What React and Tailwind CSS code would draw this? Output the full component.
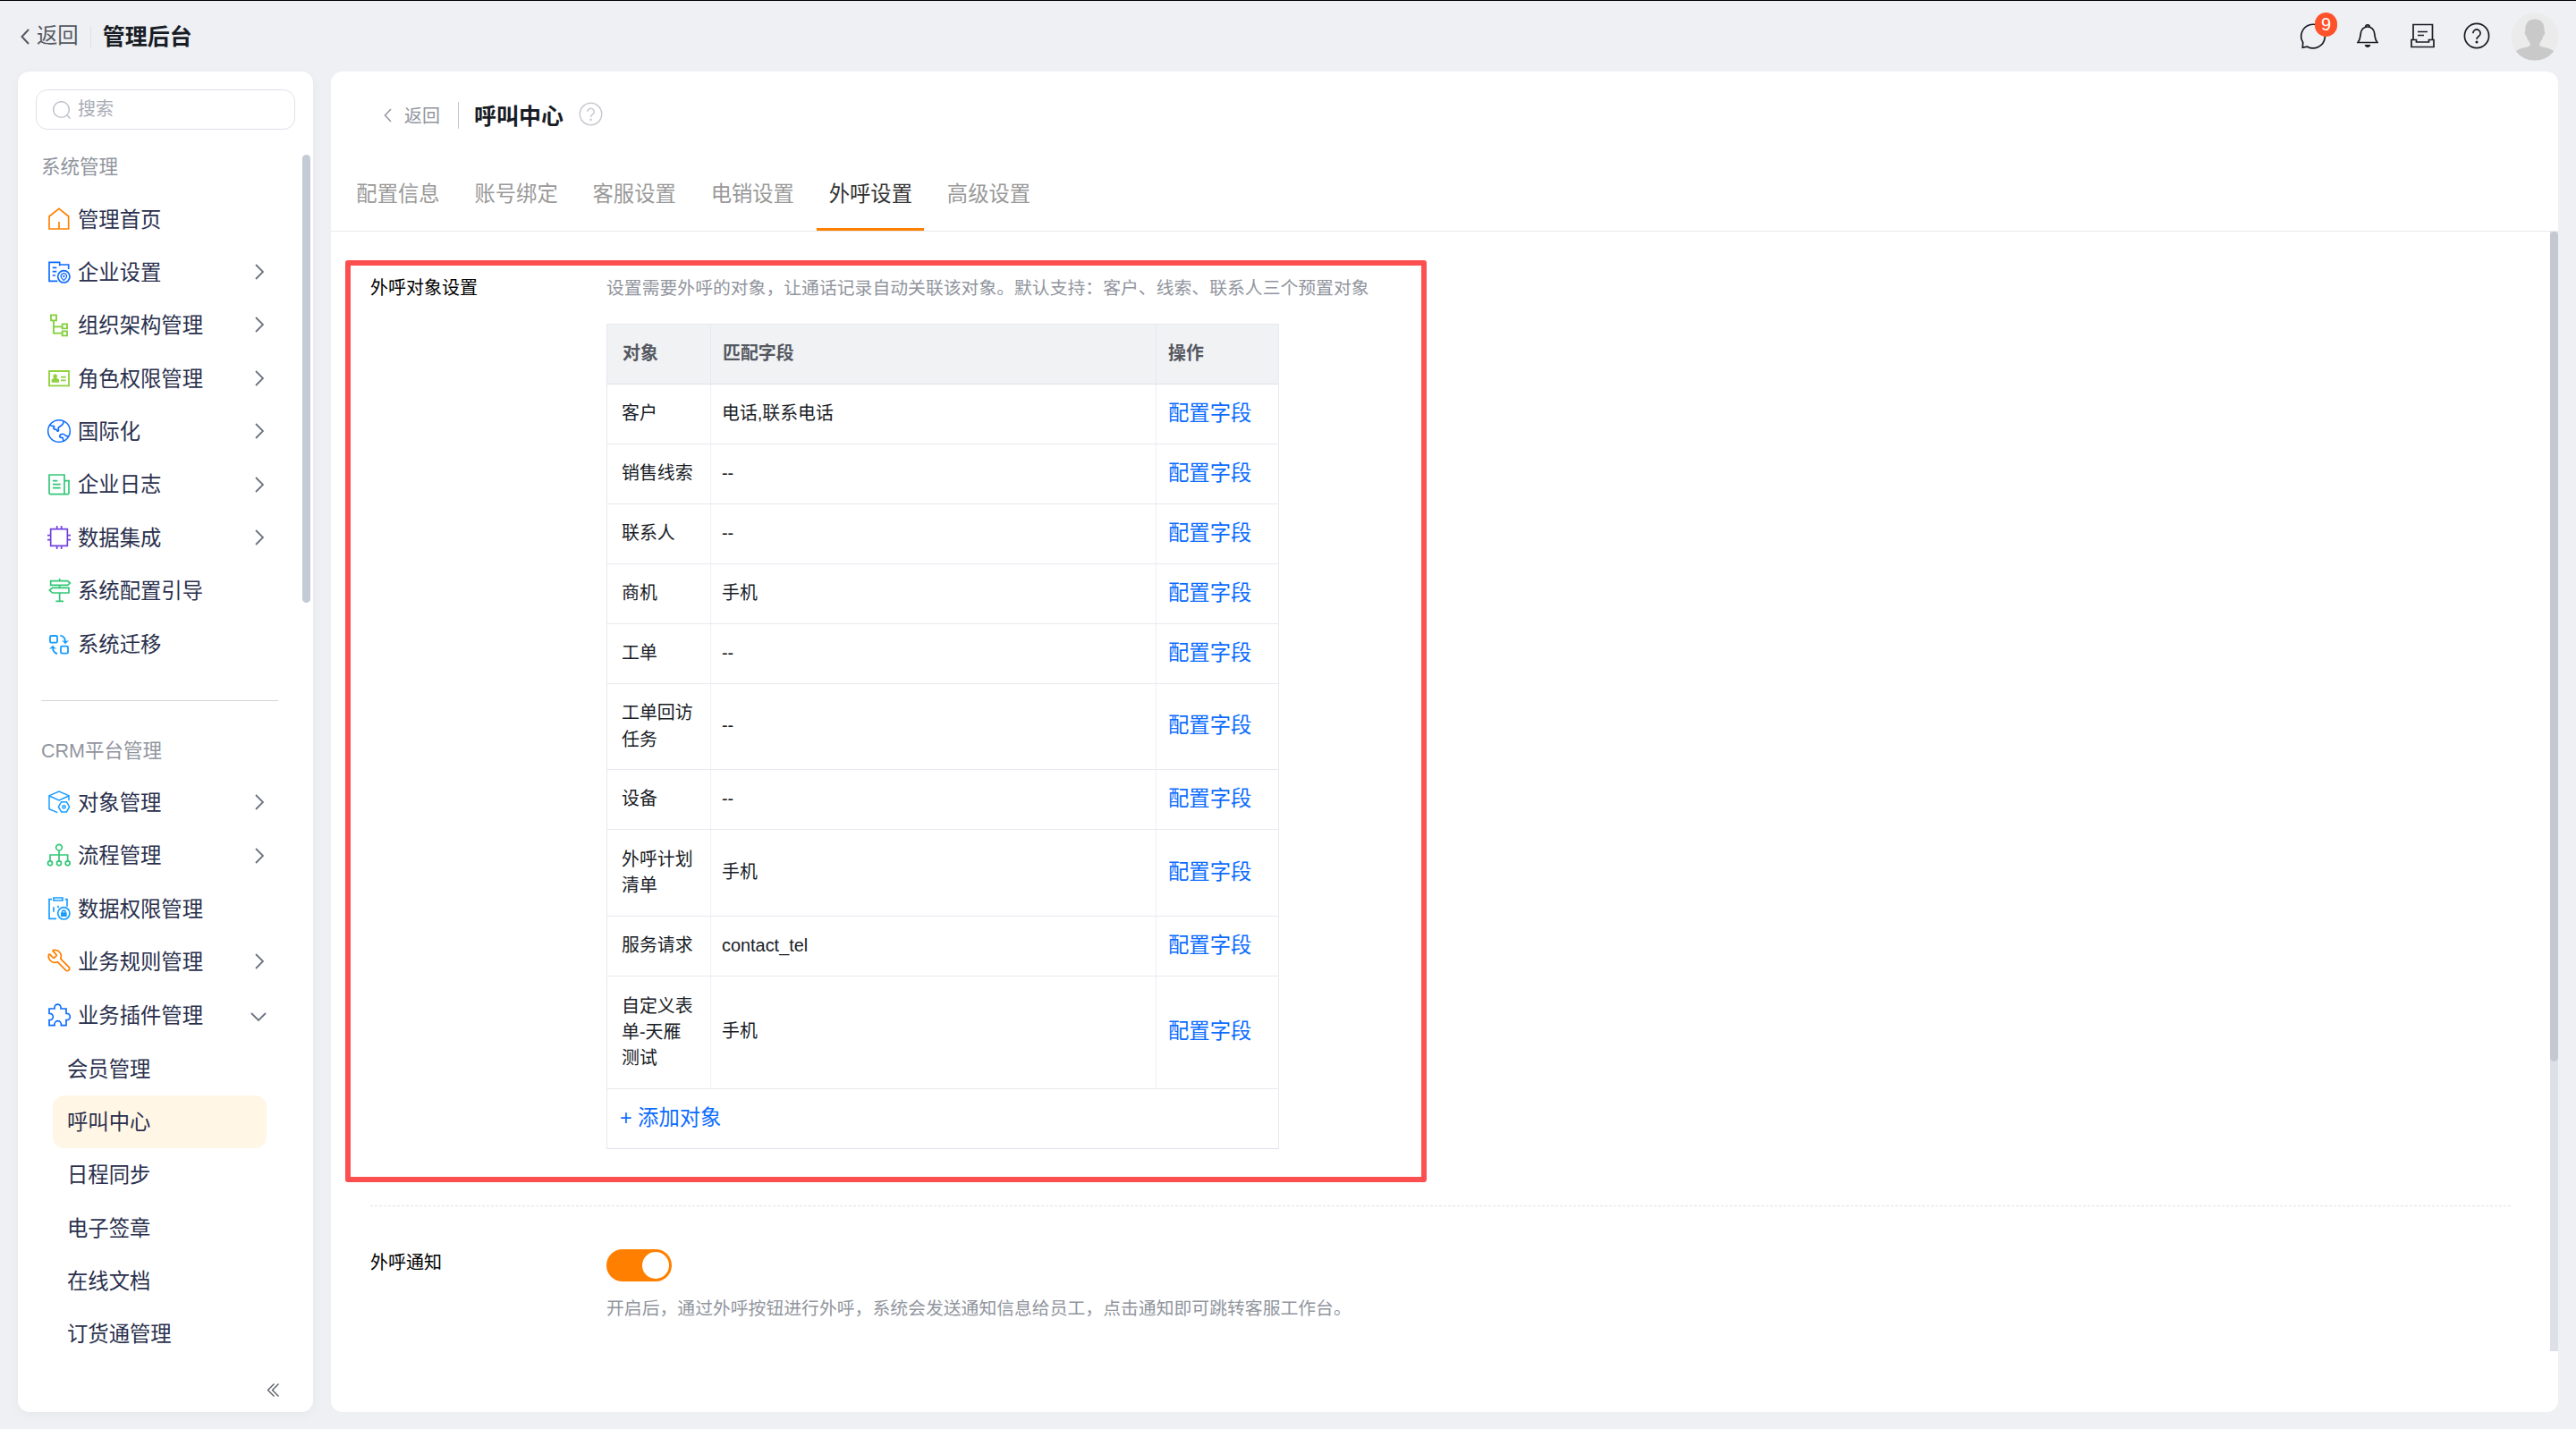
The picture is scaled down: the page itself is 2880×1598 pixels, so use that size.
import { Wrench } from 'lucide-react'

const FONT = "font-['Liberation_Sans','Noto_Sans_CJK_SC',sans-serif]"

function MenuIcon({ className, children, width = 5 }) {
  return (
    <svg
      viewBox="0 0 78 78"
      fill="none"
      stroke="currentColor"
      strokeWidth={width}
      className={`-mt-0.5 size-[26px] shrink-0 overflow-visible ${className}`}
    >
      {children}
    </svg>
  )
}

const iconos = {
  home: (
    <MenuIcon className="text-[#ff8000]">
      <path d="M6 30 39 4l32 26v42H6zM39 48v24" />
    </MenuIcon>
  ),
  company: (
    <MenuIcon className="text-[#0c6cff]">
      <path d="M34 70H6V7h35v12M41 15h30v15M17 25h14M17 38h14M17 51h10" />
      <circle cx="55" cy="55" r="20" />
      <path d="M55 68l-8-9a9.500 9.500 0 1 1 16 0z" strokeWidth="3.5" />
      <circle cx="55" cy="54" r="3.5" fill="currentColor" stroke="none" />
    </MenuIcon>
  ),
  org: (
    <MenuIcon className="text-[#82cf3a]" width={5.5}>
      <path d="M12 7h18v18H12zM21 25v43h29M21 46h29M50 37h16v15H50zM50 61h16v15H50z" />
    </MenuIcon>
  ),
  role: (
    <MenuIcon className="text-[#91d13d]" width={5.5}>
      <path d="M6 15h66v49H6zM45 35h17M45 46h17" />
      <path
        d="M26 25a7.500 7.500 0 0 1 4 13.500l9 4.500v10H14V43l8-4.500A7.500 7.500 0 0 1 26 25z"
        fill="currentColor"
        stroke="none"
      />
    </MenuIcon>
  ),
  globe: (
    <MenuIcon className="text-[#0c6cff]" width={4.5}>
      <circle cx="39" cy="39" r="37" />
      <path
        d="M10 18c3 9 14 0 13 8-8 8 5 6 9 10 2 8 8 2 4-6 2-8 18-6 18-24M71 56c-12 4-12-10-22-7-10 2-10 12-2 12 10-2 2 10 8 13"
        strokeWidth="5"
      />
    </MenuIcon>
  ),
  log: (
    <MenuIcon className="text-[#30c776]">
      <path d="M57 70V6H6v61q0 4 4 4h58q4 0 4-4V26H57M18 26h16M18 38h26M18 50h26" />
    </MenuIcon>
  ),
  chip: (
    <MenuIcon className="text-[#7341de]">
      <path d="M11 11h56v56H11zM32 0v11M47 0v11M32 67v11M47 67v11M0 32h11M0 47h11M67 32h11M67 47h11" />
    </MenuIcon>
  ),
  guide: (
    <MenuIcon className="text-[#30c776]">
      <path d="M11 8h57l8 7-8 7H11zM17 31h55v17H17L7 39zM41 0v8M41 22v9M41 48v28M28 76h26" />
    </MenuIcon>
  ),
  migrate: (
    <MenuIcon className="text-[#189dff]" width={5.5}>
      <rect x="9" y="12" width="24" height="23" rx="4" />
      <rect x="45" y="47" width="24" height="24" rx="4" />
      <path d="M43 11q17 3 17 22M33 72Q18 68 18 50" />
      <path d="M49 28l11 12 12-12-12 2zM6 56l12-12 12 12-12-2z" fill="currentColor" stroke="none" />
    </MenuIcon>
  ),
  cube: (
    <MenuIcon className="text-[#189dff]" width={4.5}>
      <path d="M34 74 6 62V17L39 3l33 14v17M6 18l33 15 33-15" />
      <path d="M47 38h17l10 17-10 17H47L37 55z" strokeLinejoin="round" />
      <circle cx="55.500" cy="55" r="5" />
    </MenuIcon>
  ),
  flow: (
    <MenuIcon className="text-[#30c776]">
      <circle cx="39" cy="11" r="10" />
      <circle cx="9" cy="64" r="7.500" />
      <circle cx="39" cy="64" r="7.500" />
      <circle cx="68" cy="64" r="7.500" />
      <path d="M39 21v35M9 56V36h59v20" />
    </MenuIcon>
  ),
  dataLock: (
    <MenuIcon className="text-[#189dff]">
      <path d="M15 8H6v65h24M59 8h7v24M21 3h30v9H21zM21 34v16M36 29v8" />
      <circle cx="55" cy="55" r="20" />
      <path d="M45 52h20v14H45z" fill="currentColor" stroke="none" />
      <path d="M50 53v-3a5 5 0 0 1 10 0v3" />
    </MenuIcon>
  ),
  wrench: (
    <Wrench size={28} strokeWidth={1.500} className="-mx-px -mt-1 shrink-0 -scale-x-100 text-[#ff8000]" />
  ),
  puzzle: (
    <MenuIcon className="text-[#0c6cff]">
      <path d="M6 18h18v-4a10 10 0 0 1 21 0v4h18v16h2a10 10 0 0 1 0 22h-2v18H46v-4a11 11 0 0 0-22 0v4H6V56h2a10 10 0 0 0 0-22H6z" />
    </MenuIcon>
  ),
}

const sistema = [
  { icon: 'home', label: '管理首页' },
  { icon: 'company', label: '企业设置', more: true },
  { icon: 'org', label: '组织架构管理', more: true },
  { icon: 'role', label: '角色权限管理', more: true },
  { icon: 'globe', label: '国际化', more: true },
  { icon: 'log', label: '企业日志', more: true },
  { icon: 'chip', label: '数据集成', more: true },
  { icon: 'guide', label: '系统配置引导' },
  { icon: 'migrate', label: '系统迁移' },
]

const crm = [
  { icon: 'cube', label: '对象管理', more: true },
  { icon: 'flow', label: '流程管理', more: true },
  { icon: 'dataLock', label: '数据权限管理' },
  { icon: 'wrench', label: '业务规则管理', more: true },
  { icon: 'puzzle', label: '业务插件管理', open: true },
]

const plugins = ['会员管理', '呼叫中心', '日程同步', '电子签章', '在线文档', '订货通管理']

const tabs = ['配置信息', '账号绑定', '客服设置', '电销设置', '外呼设置', '高级设置']

const filas = [
  { name: '客户', field: '电话,联系电话', h: 'h-[67px]' },
  { name: '销售线索', field: '--', h: 'h-[67px]' },
  { name: '联系人', field: '--', h: 'h-[67px]' },
  { name: '商机', field: '手机', h: 'h-[67px]' },
  { name: '工单', field: '--', h: 'h-[67px]' },
  { name: '工单回访任务', field: '--', h: 'h-[96px]' },
  { name: '设备', field: '--', h: 'h-[67px]' },
  { name: '外呼计划清单', field: '手机', h: 'h-[97px]' },
  { name: '服务请求', field: 'contact_tel', h: 'h-[67px]' },
  { name: '自定义表单-天雁测试', field: '手机', h: 'h-[126px]' },
]

function MenuRow({ item }) {
  return (
    <div className="flex h-[59.4px] items-center pr-[55px] pl-[33px]">
      {iconos[item.icon]}
      <span className="ml-2 flex-1 pt-px">{item.label}</span>
      {item.more ? (
        <svg viewBox="0 0 10 18" fill="none" className="-mt-0.5 h-[18px] w-[10px] stroke-[#6b7380] stroke-[1.8]">
          <path d="M1 1l8 8-8 8" />
        </svg>
      ) : null}
      {item.open ? (
        <svg viewBox="0 0 18 10" fill="none" className="mt-[3px] -mr-[3px] h-[10px] w-[18px] stroke-[#6b7380] stroke-[1.8]">
          <path d="M1 1l8 8 8-8" />
        </svg>
      ) : null}
    </div>
  )
}

function HelpIcon({ className }) {
  return (
    <svg viewBox="0 0 30 30" fill="none" stroke="currentColor" className={className}>
      <circle cx="15" cy="15" r="13.600" />
      <path d="M10.900 12.200a4.100 4.100 0 1 1 6.400 3.300c-1.500 1-2.300 1.700-2.300 3.500" />
      <circle cx="15" cy="22" r="1.500" fill="currentColor" stroke="none" />
    </svg>
  )
}

function Header() {
  return (
    <header className="flex h-[79px] shrink-0 items-center justify-between pr-5 pl-[23px]">
      <div className="flex items-center">
        <svg viewBox="0 0 10 18" fill="none" className="h-[18px] w-[10px] stroke-[#545861] stroke-2">
          <path d="M9 1L1.500 9 9 17" />
        </svg>
        <span className="ml-2 text-[23.33px] leading-none text-[#545861]">返回</span>
        <span className="ml-[13px] h-6 w-px bg-[#dee1e8]" />
        <span className="ml-[13px] pt-px text-[25px] leading-none font-bold text-[#181c25]">管理后台</span>
      </div>
      <div className="-mt-0.5 flex items-center text-[#181c25]">
        <div className="relative mr-[34px]">
          <svg viewBox="0 0 30 30" fill="none" stroke="currentColor" strokeWidth="1.700" className="size-[30px]">
            <path d="M3.700 22.500A13.300 13.300 0 1 1 8.600 27.200L3.300 28.200z" />
          </svg>
          <span className="absolute -top-[11px] left-[17px] flex h-[27px] w-[25px] items-center justify-center rounded-full bg-[#ff522a] text-xl leading-none text-white">
            9
          </span>
        </div>
        <svg viewBox="0 0 24 28" fill="none" stroke="currentColor" strokeWidth="1.700" className="mr-9 h-7 w-6">
          <path d="M1 21.500c3-3 2.500-5.500 3.300-10C5 7 8 4 12 4s7 3 7.700 7.500c.8 4.500.3 7 3.300 10zM9.800 4a2.200 2.200 0 0 1 4.400 0" />
          <path d="M8.500 24h7q-1 3-3.500 3t-3.500-3z" fill="currentColor" stroke="none" />
        </svg>
        <svg viewBox="0 0 27 28" fill="none" stroke="currentColor" strokeWidth="1.700" className="mr-[32px] h-7 w-[27px]">
          <path d="M3 18V1.500h21.500V18M1 18.500h5.500V21h14v-2.500H26V26.500H1zM8 9.500h11M8 13.500h7" />
        </svg>
        <HelpIcon className="mr-[23px] size-[30px] stroke-[1.700]" />
        <svg viewBox="0 0 54 54" className="mt-0.5 -mr-px size-[54px]">
          <circle cx="27" cy="27" r="26.500" fill="#ebebeb" />
          <path
            d="M27 7.500c7 0 11 4 10.600 13 1.200 1 .6 5-1.200 5.800-.8 4-3 6-4 8.200-.8 3.500 1.500 3.500 5 4.500 4 .8 7.600 1.500 10.800 4.200A26.500 26.500 0 0 1 27 53.500 26.500 26.500 0 0 1 5.800 43.200c3.200-2.700 6.800-3.400 10.800-4.200 3.500-1 5.800-1 5-4.500-1-2.200-3.200-4.200-4-8.200-1.800-.8-2.400-4.800-1.200-5.800C16 11.500 20 7.500 27 7.500z"
            fill="#c9c9c9"
          />
        </svg>
      </div>
    </header>
  )
}

function Sidebar() {
  return (
    <aside className="relative flex w-[330px] shrink-0 flex-col rounded-[13px] bg-white text-[23.33px] leading-none text-[#2a304d] shadow-[0_3px_13px_rgba(0,0,0,0.04)]">
      <div className="mx-5 mt-5 flex h-[45px] shrink-0 items-center rounded-[13px] border border-[#dee1e8] pl-[18px]">
        <svg viewBox="0 0 20 20" fill="none" className="size-5 stroke-[#c1c5ce] stroke-[1.6]">
          <circle cx="9.500" cy="9.500" r="8.800" />
          <path d="M15.500 15.500l4 4" />
        </svg>
        <span className="ml-2 pb-px text-xl leading-none text-[#a8acb5]">搜索</span>
      </div>
      <div className="mt-3 flex h-[59px] shrink-0 items-center pt-[3px] pl-[26px] text-[21.5px] text-[#91959e]">
        系统管理
      </div>
      {sistema.map((item) => (
        <MenuRow key={item.label} item={item} />
      ))}
      <div className="mt-8 mr-[39px] ml-[26px] h-px shrink-0 bg-[#d3d5d9]" />
      <div className="mt-[26px] flex h-[59px] shrink-0 items-center pt-[3px] pl-[26px] text-[21.5px] text-[#91959e]">
        CRM平台管理
      </div>
      {crm.map((item) => (
        <MenuRow key={item.label} item={item} />
      ))}
      {plugins.map((label) => (
        <div
          key={label}
          className={`mr-[52px] ml-[39px] flex h-[59.4px] items-center rounded-[13px] pt-0.5 pl-4 ${
            label === '呼叫中心' ? 'bg-[#fff6e5]' : ''
          }`}
        >
          {label}
        </div>
      ))}
      <svg viewBox="0 0 13 15" fill="none" className="mt-[25px] mr-[38px] h-[15px] w-[13px] self-end stroke-[#545861] stroke-[1.3]">
        <path d="M7.500.5l-7 7 7 7M12.500.5l-7 7 7 7" />
      </svg>
      <div className="absolute top-[93px] right-[3px] h-[501px] w-[9px] rounded-full bg-[#c3cbd6]" />
    </aside>
  )
}

function ObjetosTable() {
  return (
    <div className="w-[752px] border-x border-t border-[#e7e9f1] text-[19.9px] text-[#181c25]">
      <div className="grid h-[67px] grid-cols-[116px_498px_1fr] border-b border-[#dee1e8] bg-[#f1f2f4] font-bold text-[#545861]">
        <div className="flex items-center border-r border-[#e7e9f1] pl-[17px]">对象</div>
        <div className="flex items-center border-r border-[#e7e9f1] pl-[13px]">匹配字段</div>
        <div className="flex items-center pl-[13px]">操作</div>
      </div>
      {filas.map((f) => (
        <div key={f.name} className={`grid grid-cols-[116px_498px_1fr] border-b border-[#e7e9ee] ${f.h}`}>
          <div className="flex items-center border-r border-[#edeef6] pl-4">
            <span className="w-[82px] leading-[29.33px] break-all">{f.name}</span>
          </div>
          <div className="flex items-center border-r border-[#edeef6] pb-px pl-3">{f.field}</div>
          <div className="flex items-center pb-0.5 pl-[13px] text-[23.33px] text-[#0c6cff]">配置字段</div>
        </div>
      ))}
      <div className="flex h-[67px] items-center border-b border-[#e0e2ec] pb-0.5 pl-[14px] text-[23.33px] text-[#0c6cff]">
        + 添加对象
      </div>
    </div>
  )
}

function Contenido() {
  return (
    <main className="relative flex flex-1 flex-col rounded-[13px] bg-white">
      <div className="mt-[34px] flex h-[30px] items-center pl-[59px]">
        <svg viewBox="0 0 9 16" fill="none" className="h-4 w-[9px] stroke-[#91959e] stroke-[1.5]">
          <path d="M8 1L1.500 8 8 15" />
        </svg>
        <span className="ml-[14px] pt-px text-xl leading-none text-[#91959e]">返回</span>
        <span className="ml-[20px] h-[30px] w-px bg-[#c1c5ce]" />
        <span className="ml-[17px] pt-[3px] text-[25px] leading-none font-bold text-[#181c25]">呼叫中心</span>
        <HelpIcon className="-mt-[3px] ml-[17px] size-[27px] stroke-[1.7] text-[#c8cad0]" />
      </div>
      <div className="mt-[34px] flex h-[81px] gap-[12.1px] border-b border-[#e9eaec] pl-[15px]">
        {tabs.map((t) => (
          <div
            key={t}
            className={`flex w-[120px] items-center justify-center border-b-3 pt-0.5 text-[23.33px] leading-none whitespace-nowrap ${
              t === '外呼设置' ? 'border-[#ff8000] text-[#333]' : 'border-transparent text-[#999]'
            }`}
          >
            {t}
          </div>
        ))}
      </div>
      <section className="mt-8 ml-4 flex h-[1031px] w-[1209px] rounded-[3px] border-6 border-[#fc5050] pt-[9px] pl-[22px] text-xl">
        <div className="w-[264px] pt-px leading-[30px] text-black">外呼对象设置</div>
        <div>
          <p className="mb-[25px] pt-px text-[19.83px] leading-[30px] whitespace-nowrap text-[#91959e]">
            设置需要外呼的对象，让通话记录自动关联该对象。默认支持：客户、线索、联系人三个预置对象
          </p>
          <ObjetosTable />
        </div>
      </section>
      <div className="mt-[26px] mr-[53px] ml-11 border-t border-dashed border-[#dee1e8]" />
      <section className="mt-12 ml-11 flex text-xl">
        <div className="w-[264px] pt-px leading-[28px] text-black">外呼通知</div>
        <div>
          <div className="flex h-9 w-[73px] items-center justify-end rounded-full bg-[#ff8000] pr-[3px]">
            <span className="size-[30px] rounded-full bg-white" />
          </div>
          <p className="mt-[15px] text-[19.83px] leading-[30px] text-[#91959e]">
            开启后，通过外呼按钮进行外呼，系统会发送通知信息给员工，点击通知即可跳转客服工作台。
          </p>
        </div>
      </section>
      <div className="absolute top-[179px] right-0 h-[1252px] w-[9px] bg-[#dde1e7]">
        <div className="h-[928px] rounded-full bg-[#c5c8d2]" />
      </div>
    </main>
  )
}

export default function App() {
  return (
    <div className={`flex h-[1598px] w-[2880px] flex-col overflow-hidden border-t border-black bg-[#eff0f3] ${FONT}`}>
      <Header />
      <div className="flex h-[1499px] gap-5 px-5">
        <Sidebar />
        <Contenido />
      </div>
    </div>
  )
}
